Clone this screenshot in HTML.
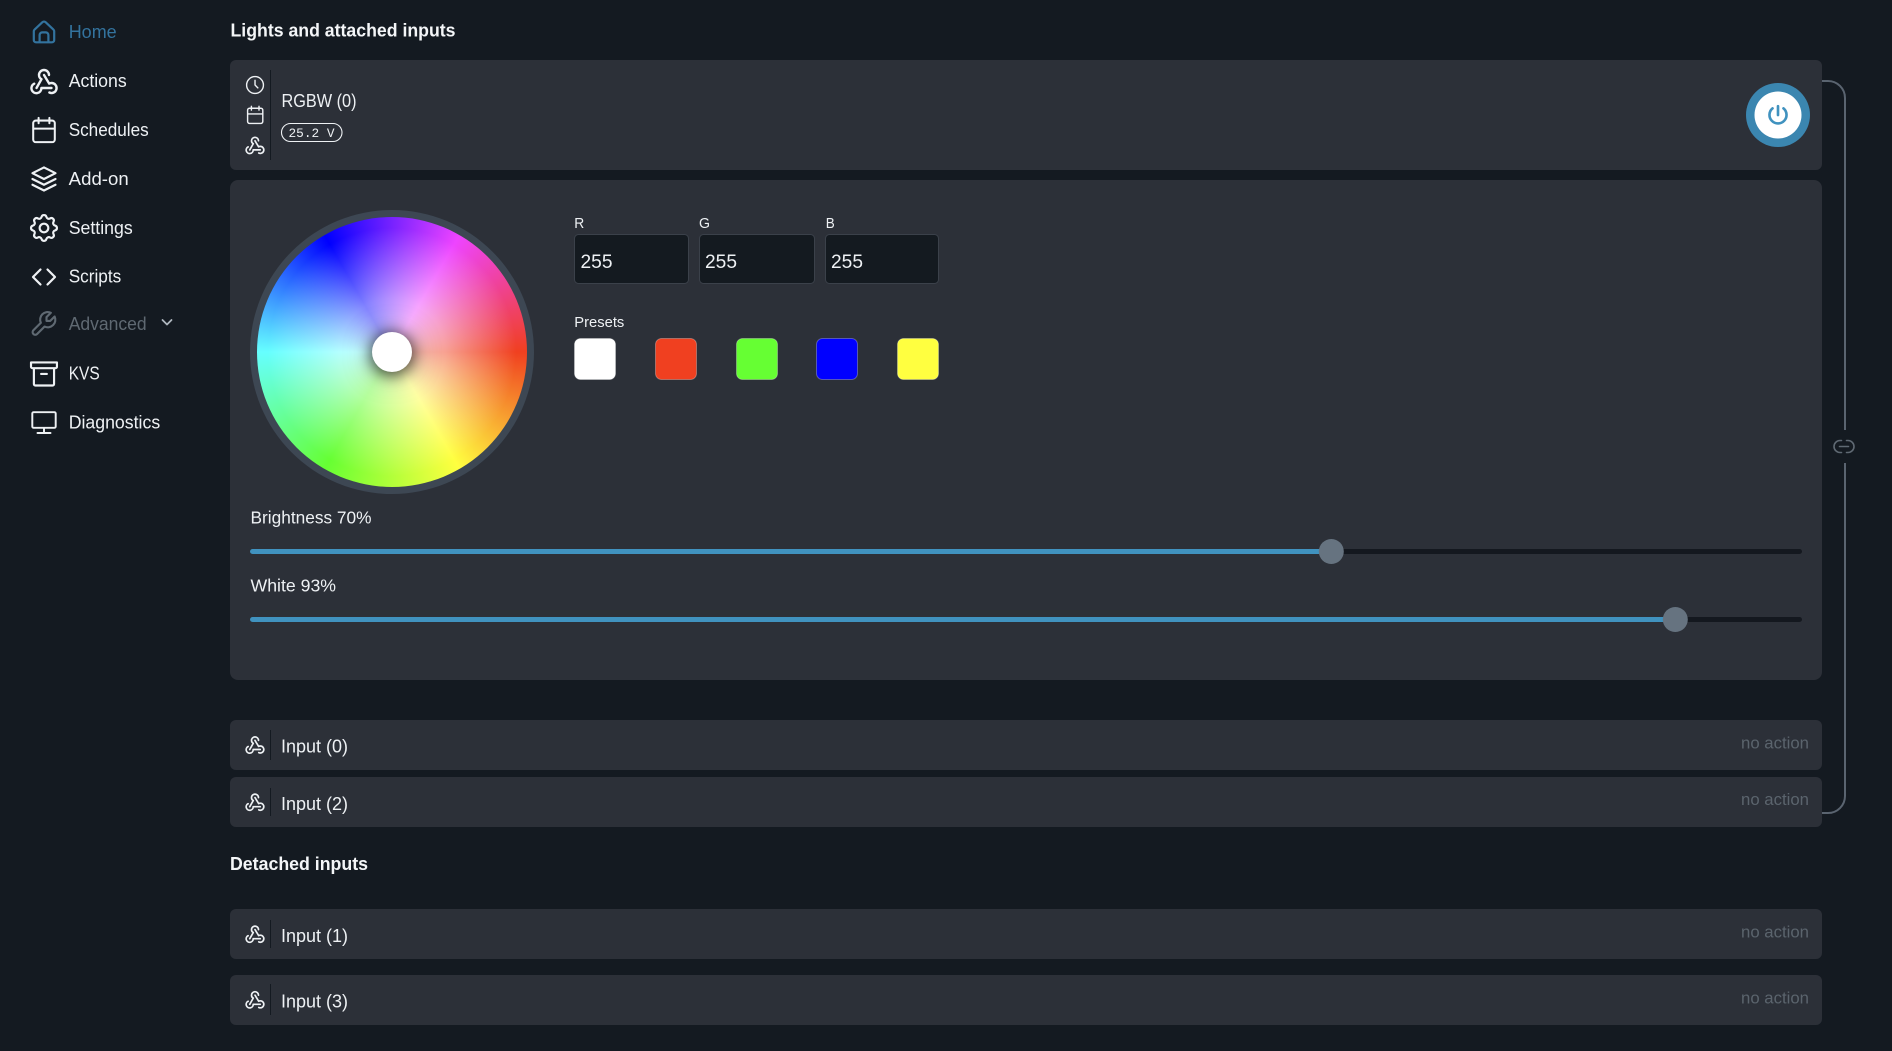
<!DOCTYPE html>
<html><head><meta charset="utf-8"><title>Lights</title>
<style>
html,body{margin:0;padding:0;width:1892px;height:1051px;overflow:hidden;background:#141a21}
svg{position:absolute;left:0;top:0}
text{font-family:"Liberation Sans",sans-serif;fill:#eef1f4;font-size:18px}
.b{font-weight:700;fill:#f4f6f8}
.s{font-size:15px}
.n{fill:#5b646d;font-size:17px}
#wheel{position:absolute;left:250px;top:210px;width:284px;height:284px;border-radius:50%;background:#3d4753}
#wheel i{position:absolute;left:7px;top:7px;width:270px;height:270px;border-radius:50%;background:radial-gradient(circle closest-side,rgba(255,255,255,.75) 0,rgba(255,255,255,.5) 40%,rgba(255,255,255,0) 92%),conic-gradient(from 90deg,#f04020,#ffff40 60deg,#66ff33 120deg,#66ffff 180deg,#0000ff 240deg,#ee44ff 300deg,#f04020 360deg)}
#wheel b{position:absolute;left:122px;top:122px;width:40px;height:40px;border-radius:50%;background:#fff;box-shadow:0 2px 14px 2px rgba(0,0,0,.6),0 2px 30px rgba(0,0,0,.35)}
</style></head><body>
<svg width="1892" height="1051" viewBox="0 0 1892 1051" fill="none">
<defs>
<g id="wh"><path d="M-9.8 2.7A5 5 0 1 0-2.6 7H7.5M5.4 11.5A5 5 0 1 0 7.5 2C6.7 2 5.9 2.2 5.2 2.6L0-6M5-6A5 5 0 1 0-5-6C-5-4.2-4-2.6-2.5-1.8L-7.5 7" stroke-linecap="round" stroke-linejoin="round" stroke-width="2.4"/></g>
</defs>

<!-- sidebar icons -->
<path d="M36 42.3a2.2 2.2 0 0 1-2.2-2.2V31.4a2.6 2.6 0 0 1 .9-2L42.4 22.2a2.4 2.4 0 0 1 3.2 0L53.3 29.4a2.6 2.6 0 0 1 .9 2V40.1a2.2 2.2 0 0 1-2.2 2.2ZM39.6 42.3V35a2.6 2.6 0 0 1 2.6-2.6h3.6a2.6 2.6 0 0 1 2.6 2.6v7.3" stroke="#33739e" stroke-width="2.2" stroke-linejoin="round"/>
<g stroke="#eef1f4" stroke-width="1.5" stroke-linecap="round" stroke-linejoin="round">
<use href="#wh" transform="translate(44 81)"/>
<path transform="translate(27.8 113.8) scale(1.35)" d="M4 7a2 2 0 0 1 2 -2h12a2 2 0 0 1 2 2v12a2 2 0 0 1 -2 2h-12a2 2 0 0 1 -2 -2v-12zM16 3v4M8 3v4M4 11h16"/>
<path transform="translate(26.7 161.7) scale(1.44)" d="M12 4l-8 4l8 4l8 -4l-8 -4M4 12l8 4l8 -4M4 16l8 4l8 -4"/>
<path transform="translate(26.7 210.7) scale(1.44)" d="M10.325 4.317c.426 -1.756 2.924 -1.756 3.35 0a1.724 1.724 0 0 0 2.573 1.066c1.543 -.94 3.31 .826 2.37 2.37a1.724 1.724 0 0 0 1.065 2.572c1.756 .426 1.756 2.924 0 3.35a1.724 1.724 0 0 0 -1.066 2.573c.94 1.543 -.826 3.31 -2.37 2.37a1.724 1.724 0 0 0 -2.572 1.065c-.426 1.756 -2.924 1.756 -3.35 0a1.724 1.724 0 0 0 -2.573 -1.066c-1.543 .94 -3.31 -.826 -2.37 -2.37a1.724 1.724 0 0 0 -1.065 -2.572c-1.756 -.426 -1.756 -2.924 0 -3.35a1.724 1.724 0 0 0 1.066 -2.573c-.94 -1.543 .826 -3.31 2.37 -2.37c1 .608 2.296 .07 2.572 -1.065zM9 12a3 3 0 1 0 6 0a3 3 0 0 0 -6 0"/>
<path stroke-width="2.2" d="M40.5 269.5L33 277L40.5 284.5M47.5 269.5L55 277L47.5 284.5"/>
<path transform="translate(26.7 356.7) scale(1.44)" d="M3 4h18v3a1 1 0 0 1 -1 1h-16a1 1 0 0 1 -1 -1zM5 8v11a1 1 0 0 0 1 1h12a1 1 0 0 0 1 -1v-11M10 12l4 0"/>
<path transform="translate(28.4 407) scale(1.3)" d="M3 5a1 1 0 0 1 1 -1h16a1 1 0 0 1 1 1v10a1 1 0 0 1 -1 1h-16a1 1 0 0 1 -1 -1v-10zM7 20h10M12 16v4"/>
</g>
<path transform="translate(59 308.4) scale(-1.25 1.25)" d="M7 10h3v-3l-3.5 -3.5a6 6 0 0 1 8 8l6 6a2 2 0 0 1 -3 3l-6 -6a6 6 0 0 1 -8 -8l3.5 3.5" stroke="#5f6972" stroke-width="1.7" stroke-linecap="round" stroke-linejoin="round"/>
<path d="M162.5 320l4.5 4.5 4.5-4.5" stroke="#aeb6be" stroke-width="1.8" stroke-linecap="round" stroke-linejoin="round"/>

<!-- sidebar labels -->
<text x="68.7" y="38" textLength="48" lengthAdjust="spacingAndGlyphs" style="fill:#33739e">Home</text>
<text x="68.7" y="87" textLength="58" lengthAdjust="spacingAndGlyphs">Actions</text>
<text x="68.7" y="136" textLength="80" lengthAdjust="spacingAndGlyphs">Schedules</text>
<text x="68.7" y="185" textLength="60" lengthAdjust="spacingAndGlyphs">Add-on</text>
<text x="68.7" y="234" textLength="64" lengthAdjust="spacingAndGlyphs">Settings</text>
<text x="68.7" y="282.7" textLength="52.5" lengthAdjust="spacingAndGlyphs">Scripts</text>
<text x="68.7" y="330" textLength="78" lengthAdjust="spacingAndGlyphs" style="fill:#5f6972">Advanced</text>
<text x="68.7" y="379.3" textLength="31" lengthAdjust="spacingAndGlyphs">KVS</text>
<text x="68.7" y="428.3" textLength="91.5" lengthAdjust="spacingAndGlyphs">Diagnostics</text>

<!-- headings -->
<text class="b" x="230.5" y="36.5" textLength="225" lengthAdjust="spacingAndGlyphs">Lights and attached inputs</text>
<text class="b" x="230" y="870" textLength="138" lengthAdjust="spacingAndGlyphs">Detached inputs</text>

<!-- connector -->
<path d="M1822 81H1828a17 17 0 0 1 17 17V430M1845 463V796a17 17 0 0 1-17 17H1822" stroke="#5a6470" stroke-width="2"/>
<path d="M1841.5 440.5h-1.5a6 6 0 0 0 0 12h1.5M1846.5 440.5h1.5a6 6 0 0 1 0 12h-1.5M1839.5 446.5h9" stroke="#5f6973" stroke-width="1.6" stroke-linecap="round"/>

<!-- panels -->
<g fill="#2c3038">
<rect x="230" y="60" width="1592" height="110" rx="6"/>
<rect x="230" y="180" width="1592" height="500" rx="8"/>
<rect x="230" y="720" width="1592" height="50" rx="6"/>
<rect x="230" y="777" width="1592" height="50" rx="6"/>
<rect x="230" y="909" width="1592" height="50" rx="6"/>
<rect x="230" y="975" width="1592" height="50" rx="6"/>
</g>
<g stroke="#141a21" stroke-width="1">
<path d="M270.5 70V160M270.5 730V760M270.5 788V816M270.5 920V948M270.5 984V1015"/>
</g>

<!-- header row -->
<g stroke="#eef1f4" stroke-width="1.5" stroke-linecap="round" stroke-linejoin="round">
<path transform="translate(243.8 73.8) scale(.935)" d="M3 12a9 9 0 1 0 18 0a9 9 0 0 0 -18 0M12 7v5l3 3"/>
<path transform="translate(243.8 103.5) scale(.95)" d="M4 7a2 2 0 0 1 2 -2h12a2 2 0 0 1 2 2v12a2 2 0 0 1 -2 2h-12a2 2 0 0 1 -2 -2v-12zM16 3v4M8 3v4M4 11h16"/>
<use href="#wh" transform="translate(255 145) scale(.7)"/>
<use href="#wh" transform="translate(255 744.6) scale(.7)"/>
<use href="#wh" transform="translate(255 801.8) scale(.7)"/>
<use href="#wh" transform="translate(255 933.8) scale(.7)"/>
<use href="#wh" transform="translate(255 999.4) scale(.7)"/>
</g>
<text x="281.5" y="107" textLength="75" lengthAdjust="spacingAndGlyphs">RGBW (0)</text>
<rect x="281.5" y="123.5" width="60.5" height="18" rx="9" stroke="#eef1f4" stroke-width="1.1"/>
<text x="288.5" y="137" style="font-family:'Liberation Mono',monospace;font-size:13px" textLength="46" lengthAdjust="spacingAndGlyphs">25.2 V</text>

<!-- power -->
<circle cx="1778" cy="115" r="32" fill="#3b86b0"/>
<circle cx="1778" cy="115" r="23.5" fill="#fff"/>
<path transform="translate(1764.8 101.8) scale(1.1)" d="M7 6a7.75 7.75 0 1 0 10 0M12 4l0 8" stroke="#4092bf" stroke-width="2.4" stroke-linecap="round" stroke-linejoin="round"/>

<!-- RGB -->
<text class="s" x="574.3" y="228" textLength="10" lengthAdjust="spacingAndGlyphs">R</text>
<text class="s" x="699" y="228" textLength="11" lengthAdjust="spacingAndGlyphs">G</text>
<text class="s" x="825.7" y="228" textLength="9" lengthAdjust="spacingAndGlyphs">B</text>
<g fill="#141a20" stroke="#3b414a">
<rect x="574.5" y="234.5" width="114" height="49" rx="4"/>
<rect x="699.5" y="234.5" width="115" height="49" rx="4"/>
<rect x="825.5" y="234.5" width="113" height="49" rx="4"/>
</g>
<text x="580.5" y="268" style="font-size:19px" textLength="32" lengthAdjust="spacingAndGlyphs">255</text>
<text x="705" y="268" style="font-size:19px" textLength="32" lengthAdjust="spacingAndGlyphs">255</text>
<text x="831" y="268" style="font-size:19px" textLength="32" lengthAdjust="spacingAndGlyphs">255</text>

<text class="s" x="574.3" y="327" textLength="50" lengthAdjust="spacingAndGlyphs">Presets</text>
<g stroke="rgba(255,255,255,.28)" stroke-width="1">
<rect x="574.5" y="338.5" width="41" height="41" rx="6" fill="#fff"/>
<rect x="655.5" y="338.5" width="41" height="41" rx="6" fill="#f04020"/>
<rect x="736.5" y="338.5" width="41" height="41" rx="6" fill="#66ff33"/>
<rect x="816.5" y="338.5" width="41" height="41" rx="6" fill="#0000ff"/>
<rect x="897.5" y="338.5" width="41" height="41" rx="6" fill="#ffff40"/>
</g>

<!-- sliders -->
<text x="250.5" y="523.5" style="font-size:17.5px" textLength="121" lengthAdjust="spacingAndGlyphs">Brightness 70%</text>
<rect x="250" y="549" width="1552" height="5" rx="2.5" fill="#14181f"/>
<rect x="250" y="549" width="1081" height="5" rx="2.5" fill="#4092bf"/>
<circle cx="1331.3" cy="551.5" r="12.5" fill="#667380"/>
<text x="250.5" y="591.5" style="font-size:17.5px" textLength="85.5" lengthAdjust="spacingAndGlyphs">White 93%</text>
<rect x="250" y="617" width="1552" height="5" rx="2.5" fill="#14181f"/>
<rect x="250" y="617" width="1425" height="5" rx="2.5" fill="#4092bf"/>
<circle cx="1675.3" cy="619.5" r="12.5" fill="#667380"/>

<!-- inputs -->
<text x="281" y="752.5" textLength="67" lengthAdjust="spacingAndGlyphs">Input (0)</text>
<text x="281" y="809.8" textLength="67" lengthAdjust="spacingAndGlyphs">Input (2)</text>
<text x="281" y="941.8" textLength="67" lengthAdjust="spacingAndGlyphs">Input (1)</text>
<text x="281" y="1007.6" textLength="67" lengthAdjust="spacingAndGlyphs">Input (3)</text>
<text class="n" x="1741" y="748.3" textLength="68" lengthAdjust="spacingAndGlyphs">no action</text>
<text class="n" x="1741" y="805.2" textLength="68" lengthAdjust="spacingAndGlyphs">no action</text>
<text class="n" x="1741" y="937.5" textLength="68" lengthAdjust="spacingAndGlyphs">no action</text>
<text class="n" x="1741" y="1003.5" textLength="68" lengthAdjust="spacingAndGlyphs">no action</text>
</svg>
<div id="wheel"><i></i><b></b></div>
</body></html>
